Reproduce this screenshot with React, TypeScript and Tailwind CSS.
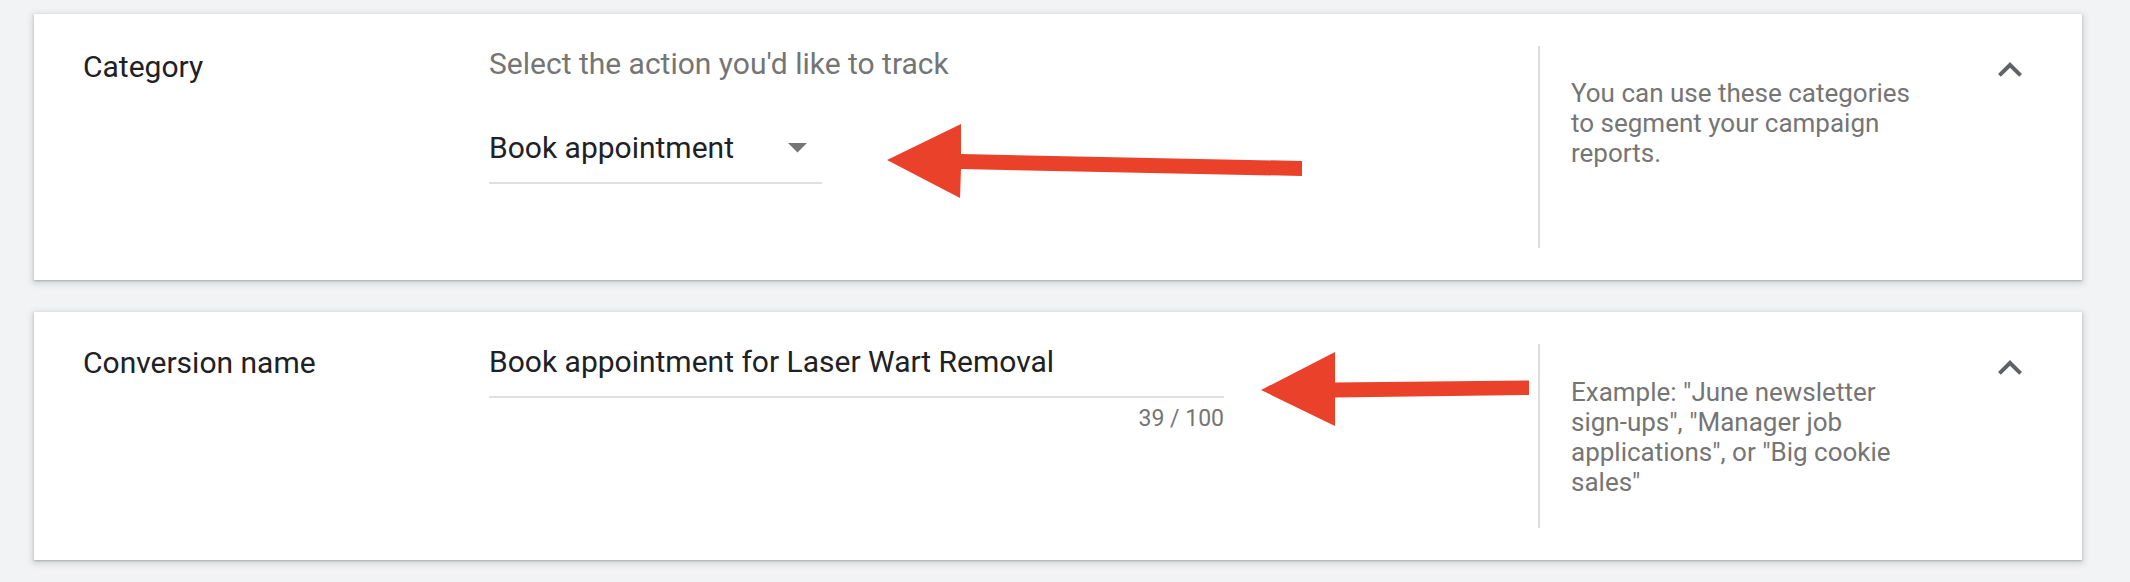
import React from "react";

function Chevron() {
  return (
    <svg width="48" height="48" viewBox="0 0 24 24" className="block">
      <path d="M12 8l-6 6 1.41 1.41L12 10.83l4.59 4.58L18 14z" fill="#5f6368" />
    </svg>
  );
}

function Arrows() {
  return (
    <svg
      className="absolute left-0 top-0 pointer-events-none"
      width="2130"
      height="582"
      viewBox="0 0 2130 582"
    >
      <polygon
        points="887,160 961,124 961,154 1302,161 1302,176 961,169 960,198"
        fill="#e9412a"
      />
      <polygon
        points="1261,390 1335,352 1335,382.5 1529,380.5 1529,395 1335,397.5 1335,426"
        fill="#e9412a"
      />
    </svg>
  );
}

export default function App() {
  return (
    <div
      className="relative w-[2130px] h-[582px] bg-[#f1f3f4] pt-[14px] pl-[34px] pr-[48px] flex flex-col gap-[32px]"
      style={{ fontFamily: "Roboto, 'Noto Sans', Arial, sans-serif" }}
    >
      {/* Card 1 */}
      <div className="bg-white flex pl-[49px] pr-[48px] py-[32px] shadow-[0_1px_2px_rgba(60,64,67,0.3),0_2px_6px_2px_rgba(60,64,67,0.15)]">
        <div className="w-[406px] shrink-0 pt-[3px] text-[30px] leading-[36px] text-[#202124]">
          Category
        </div>
        <div className="w-[1049px] shrink-0 pb-[64px]">
          <div className="text-[30px] leading-[36px] text-[#757575]">
            Select the action you'd like to track
          </div>
          <div className="mt-[48px] w-[333px] pb-[16px] border-b-2 border-[#e0e0e0] flex items-center justify-between pr-[15px]">
            <span className="text-[30px] leading-[36px] text-[#202124]">Book appointment</span>
            <svg width="19" height="10" viewBox="0 0 19 10" className="block">
              <polygon points="0,0 19,0 9.5,9.5" fill="#757575" />
            </svg>
          </div>
        </div>
        <div className="border-l-2 border-[#dadce0] pl-[31px] pt-[32px] pb-[32px]">
          <p className="w-[350px] text-[26px] leading-[30px] text-[#757575]">
            You can use these categories to segment your campaign reports.
          </p>
        </div>
        <div className="ml-auto">
          <Chevron />
        </div>
      </div>

      {/* Card 2 */}
      <div className="bg-white flex pl-[49px] pr-[48px] py-[32px] shadow-[0_1px_2px_rgba(60,64,67,0.3),0_2px_6px_2px_rgba(60,64,67,0.15)]">
        <div className="w-[406px] shrink-0 pt-[1px] text-[30px] leading-[36px] text-[#202124]">
          Conversion name
        </div>
        <div className="w-[1049px] shrink-0">
          <div className="w-[735px]">
            <div className="pb-[16px] border-b-2 border-[#e0e0e0] text-[30px] leading-[36px] text-[#202124]">
              Book appointment for Laser Wart Removal
            </div>
            <div className="mt-[8px] text-right text-[23px] leading-[26px] text-[#757575]">
              39 / 100
            </div>
          </div>
        </div>
        <div className="border-l-2 border-[#dadce0] pl-[31px] pt-[33px] pb-[31px]">
          <p className="w-[350px] text-[26px] leading-[30px] text-[#757575]">
            Example: "June newsletter sign-ups", "Manager job applications", or "Big cookie sales"
          </p>
        </div>
        <div className="ml-auto">
          <Chevron />
        </div>
      </div>

      <Arrows />
    </div>
  );
}
